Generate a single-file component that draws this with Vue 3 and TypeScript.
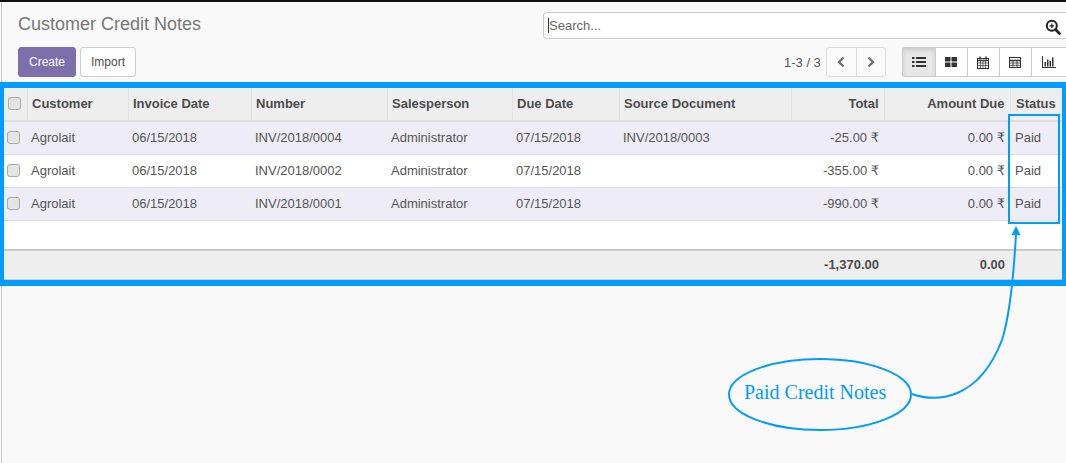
<script setup lang="ts">
interface Row {
  number: string
  source: string
  total: string
}

const columns = [
  { label: 'Customer', width: 101 },
  { label: 'Invoice Date', width: 123 },
  { label: 'Number', width: 136 },
  { label: 'Salesperson', width: 125 },
  { label: 'Due Date', width: 107 },
  { label: 'Source Document', width: 172 },
  { label: 'Total', width: 93, right: true },
  { label: 'Amount Due', width: 126, right: true },
  { label: 'Status', width: 52 },
]

const rows: Row[] = [
  { number: 'INV/2018/0004', source: 'INV/2018/0003', total: '-25.00' },
  { number: 'INV/2018/0002', source: '', total: '-355.00' },
  { number: 'INV/2018/0001', source: '', total: '-990.00' },
]
</script>

<template>
  <div class="page">
    <div class="control-panel">
      <div class="cp-left">
        <h1 class="title">Customer Credit Notes</h1>
        <div class="actions">
          <button class="btn btn-primary">Create</button>
          <button class="btn">Import</button>
        </div>
      </div>
      <div class="cp-right">
        <div class="search">
          <span class="caret"></span>
          <span class="placeholder">Search...</span>
          <svg class="search-icon" width="16" height="16" viewBox="0 0 16 16">
            <circle cx="6.8" cy="6.8" r="5" fill="none" stroke="#222" stroke-width="2" />
            <path d="M10.6 10.6 14.4 14.4" stroke="#222" stroke-width="2.8" stroke-linecap="round" />
            <path d="M4.5 6.8h4.6M6.8 4.5v4.6" stroke="#222" stroke-width="1.2" />
          </svg>
        </div>
        <div class="tools">
          <span class="pager">1-3 / 3</span>
          <div class="btn-group pager-btns">
            <button class="tool-btn">
              <svg width="10" height="12" viewBox="0 0 10 12"><path d="M7.5 1.5 3 6l4.5 4.5" fill="none" stroke="#6f6f6f" stroke-width="2.2" /></svg>
            </button>
            <button class="tool-btn">
              <svg width="10" height="12" viewBox="0 0 10 12"><path d="M2.5 1.5 7 6l-4.5 4.5" fill="none" stroke="#6f6f6f" stroke-width="2.2" /></svg>
            </button>
          </div>
          <div class="btn-group views">
            <button class="view-btn active">
              <svg width="14" height="12" viewBox="0 0 14 12" fill="#333">
                <path d="M0 1h2.5v2H0zM4 1h10v2H4zM0 5h2.5v2H0zM4 5h10v2H4zM0 9h2.5v2H0zM4 9h10v2H4z" />
              </svg>
            </button>
            <button class="view-btn">
              <svg width="12" height="10" viewBox="0 0 12 10" fill="#333">
                <rect x="0" y="0" width="5.5" height="4.5" rx="0.5" /><rect x="6.5" y="0" width="5.5" height="4.5" rx="0.5" />
                <rect x="0" y="5.5" width="5.5" height="4.5" rx="0.5" /><rect x="6.5" y="5.5" width="5.5" height="4.5" rx="0.5" />
              </svg>
            </button>
            <button class="view-btn">
              <svg width="12" height="13" viewBox="0 0 12 13" fill="none" stroke="#333">
                <rect x="0.5" y="2.5" width="11" height="10" />
                <path d="M0.5 4.5h11" stroke-width="1.5" />
                <path d="M0.5 7h11M0.5 9.5h11M3.5 4.5v8M6 4.5v8M8.5 4.5v8" stroke-width="0.7" />
                <path d="M3 0.5v3M9 0.5v3" stroke-width="1.5" />
              </svg>
            </button>
            <button class="view-btn">
              <svg width="12" height="11" viewBox="0 0 12 11" fill="none" stroke="#333">
                <rect x="0.5" y="0.5" width="11" height="10" />
                <path d="M0.5 3.5h11" stroke-width="1.5" />
                <path d="M0.5 6h11M0.5 8.3h11M4 3.5v7M8 3.5v7" stroke-width="0.8" />
              </svg>
            </button>
            <button class="view-btn last">
              <svg width="14" height="12" viewBox="0 0 14 12" fill="#333">
                <path d="M0 0h1v11h13v1H0z" />
                <path d="M2.5 6H4v4.5H2.5zM5 3.5h1.5v7H5zM7.5 5H9v5.5H7.5zM10 1.5h1.5v9H10z" />
              </svg>
            </button>
          </div>
        </div>
      </div>
    </div>

    <div class="list-frame">
      <table class="list">
        <colgroup>
          <col style="width: 23px" />
          <col v-for="c in columns" :key="c.label" :style="{ width: c.width + 'px' }" />
        </colgroup>
        <thead>
          <tr>
            <th class="check-cell"><span class="check"></span></th>
            <th v-for="c in columns" :key="c.label" :class="{ right: c.right }">{{ c.label }}</th>
          </tr>
        </thead>
        <tbody>
          <tr v-for="r in rows" :key="r.number">
            <td class="check-cell"><span class="check"></span></td>
            <td>Agrolait</td>
            <td>06/15/2018</td>
            <td>{{ r.number }}</td>
            <td>Administrator</td>
            <td>07/15/2018</td>
            <td>{{ r.source }}</td>
            <td class="right">{{ r.total }} <span class="rupee">₹</span></td>
            <td class="right">0.00 <span class="rupee">₹</span></td>
            <td>Paid</td>
          </tr>
          <tr class="filler"><td colspan="10"></td></tr>
        </tbody>
        <tfoot>
          <tr>
            <td colspan="7"></td>
            <td class="right">-1,370.00</td>
            <td class="right">0.00</td>
            <td></td>
          </tr>
        </tfoot>
      </table>
    </div>

    <!-- annotation drawn over the list -->
    <div class="status-box"></div>
    <svg class="callout" width="1066" height="463" viewBox="0 0 1066 463">
      <ellipse cx="820" cy="394.5" rx="91" ry="35.5" fill="none" stroke="#009cff" stroke-width="2" />
      <path d="M912 394C935 402 978 402 1002 340C1010 315 1014 270 1016 234" fill="none" stroke="#009cff" stroke-width="2" />
      <path d="M1016 226 1020.5 235 1011.5 235Z" fill="#009cff" />
    </svg>
    <span class="callout-text">Paid Credit Notes</span>
  </div>
</template>

<style>
html,
body {
  margin: 0;
  background: #f9f9f9;
}
</style>

<style scoped>
.page {
  position: relative;
  width: 1066px;
  height: 463px;
  box-sizing: border-box;
  overflow: hidden;
  border-top: 2px solid #111;
  background: #f9f9f9;
  font-family: "Liberation Sans", Arial, sans-serif;
  font-size: 13px;
  color: #4c4c4c;
}
.page::before {
  content: "";
  position: absolute;
  left: 1px;
  top: 0;
  bottom: 0;
  width: 1px;
  background: #c8c8c8;
}
.control-panel {
  display: flex;
  justify-content: space-between;
  height: 80px;
  box-sizing: border-box;
  padding-left: 18px;
}
.title {
  margin: 12px 0 0;
  font-size: 18px;
  line-height: 20px;
  font-weight: 400;
  color: #777;
}
.actions {
  display: flex;
  gap: 4px;
  margin-top: 13px;
}
.btn {
  height: 30px;
  padding: 0 10px;
  box-sizing: border-box;
  font: 12px "Liberation Sans", Arial, sans-serif;
  color: #4c4c4c;
  background: #fff;
  border: 1px solid #ccc;
  border-radius: 3px;
}
.btn-primary {
  width: 58px;
  background: #7c6fab;
  border-color: #7c6fab;
  color: #fff;
}
.cp-right {
  width: 523px;
}
.search {
  position: relative;
  display: flex;
  align-items: center;
  height: 27px;
  margin-top: 10px;
  box-sizing: border-box;
  border: 1px solid #ccc;
  border-right: 0;
  border-radius: 4px 0 0 4px;
  background: #fff;
  padding-left: 4px;
  font-size: 13px;
  color: #666;
}
.caret {
  width: 1px;
  height: 15px;
  background: #333;
}
.search-icon {
  position: absolute;
  right: 5px;
  top: 6px;
}
.tools {
  display: flex;
  align-items: center;
  margin-top: 8px;
}
.pager {
  margin-left: 241px;
  font-size: 13px;
  color: #555;
}
.btn-group {
  display: flex;
  height: 30px;
  box-sizing: border-box;
  border: 1px solid #ddd;
  border-radius: 3px;
}
.pager-btns {
  margin-left: 5px;
  background: #fafafa;
}
.tool-btn {
  width: 29px;
  padding: 0;
  display: flex;
  align-items: center;
  justify-content: center;
  background: none;
  border: 0;
}
.tool-btn + .tool-btn {
  border-left: 1px solid #ddd;
}
.views {
  margin-left: 16px;
  width: 164px;
  border-color: #ccc;
  border-right: 0;
  border-radius: 3px 0 0 3px;
  background: #fff;
}
.view-btn {
  flex: 0 0 32px;
  padding: 0;
  display: flex;
  align-items: center;
  justify-content: center;
  background: none;
  border: 0;
}
.view-btn + .view-btn {
  border-left: 1px solid #ccc;
}
.view-btn.last {
  flex: 1;
}
.view-btn.active {
  background: #e6e6e6;
  box-shadow: inset 0 2px 4px rgba(0, 0, 0, 0.12);
}
.list-frame {
  position: relative;
  box-sizing: border-box;
  border: solid #009cff;
  border-width: 6px 4px;
  background: #fff;
  height: 204px;
}
.list {
  width: 1058px;
  table-layout: fixed;
  border-collapse: collapse;
  font-size: 13px;
}
th,
td {
  padding: 0 5px 2px 4px;
  text-align: left;
  white-space: nowrap;
  overflow: hidden;
}
th {
  height: 30px;
  padding-left: 4.5px;
  background: #eee;
  border-bottom: 2px solid #ddd;
  border-left: 1px solid #e2e2e2;
  font-weight: 700;
  color: #4c4c4c;
}
th:first-child {
  border-left: 0;
}
th:last-child {
  padding-left: 5.5px;
}
tbody td:last-child {
  padding-left: 5px;
}
tbody td {
  height: 30px;
  border-bottom: 1px solid #ddd;
  color: #555;
}
tbody tr:nth-child(odd) td {
  background: #eeedf7;
}
.filler td {
  height: 26px;
  border-bottom: 0;
  background: #fff !important;
}
tfoot td {
  height: 26px;
  background: #eee;
  border-top: 2px solid #cacaca;
  border-bottom: 1px solid #cacaca;
  font-weight: 700;
  color: #4c4c4c;
}
.right {
  text-align: right;
}
.rupee {
  font-family: "DejaVu Sans", sans-serif;
}
th.check-cell {
  padding: 0 0 2px 4px;
}
td.check-cell {
  padding: 0 0 2px 3px;
}
.check {
  display: block;
  width: 11px;
  height: 11px;
  border: 1px solid #aaa;
  border-radius: 3px;
  background: #e4e4e4;
}
.status-box {
  position: absolute;
  left: 1008px;
  top: 112px;
  width: 52px;
  height: 110px;
  box-sizing: border-box;
  border: 2px solid #009cff;
}
.callout {
  position: absolute;
  left: 0;
  top: -2px;
  pointer-events: none;
}
.callout-text {
  position: absolute;
  left: 744px;
  top: 379px;
  font-family: "Liberation Serif", "Times New Roman", serif;
  font-size: 20px;
  line-height: 23px;
  color: #009cff;
}
</style>
